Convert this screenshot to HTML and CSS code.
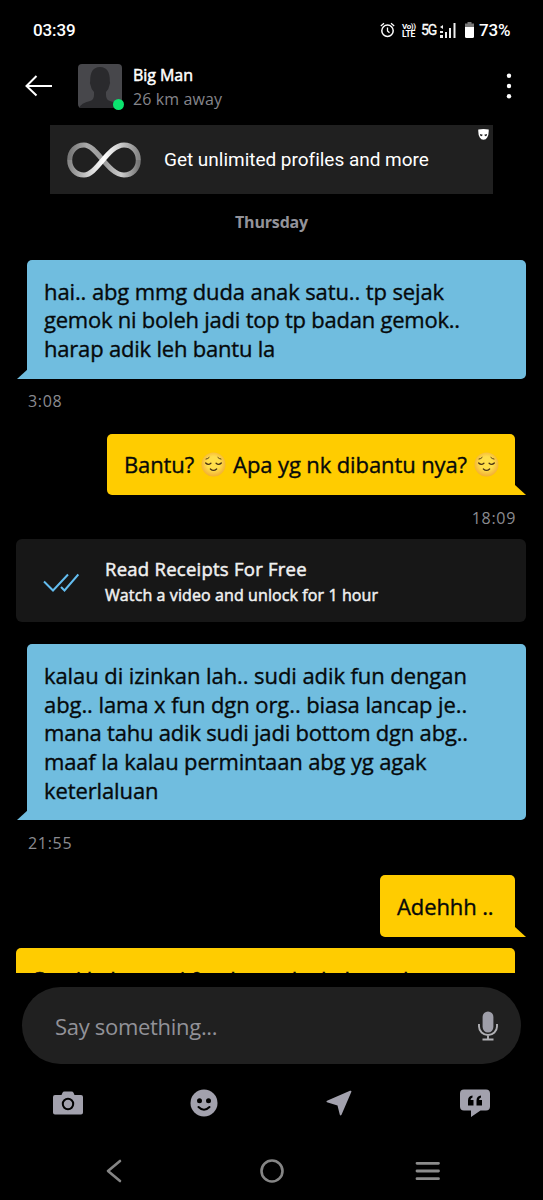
FILE: index.html
```html
<!DOCTYPE html>
<html lang="ms">
<head>
<meta charset="utf-8">
<title>Big Man</title>
<link rel="stylesheet" href="styles.css">
</head>
<body>
<svg width="0" height="0" class="defs" aria-hidden="true">
  <defs>
    <radialGradient id="face" cx=".5" cy=".45" r=".55"><stop offset=".5" stop-color="#ffdf4a"/><stop offset="1" stop-color="#f3ae35"/></radialGradient>
    <symbol id="relieved" viewBox="0 0 24 24">
      <circle cx="12" cy="12" r="11.5" fill="url(#face)"/>
      <g fill="none" stroke="#4a3212" stroke-width="1.3" stroke-linecap="round">
        <path d="M4.500 10.500q2.500 2.600 5 .2M14.500 10.700q2.500 2.400 5-.2M9 16.300q3 2.700 6 0"/>
        <path d="M4.800 6.800q1.800-.2 3-1.500M16.200 5.300q1.200 1.300 3 1.500" stroke-width=".9"/>
      </g>
    </symbol>
  </defs>
</svg>
<div class="phone">
  <div class="status">
    <span class="clock">03:39</span>
    <svg class="alarm" width="15" height="16" viewBox="0 0 15 16" fill="none" stroke="#fff"><circle cx="7.500" cy="8.700" r="5.700" stroke-width="1.500"/><path d="M7.500 5.500v3.500l2 1.800M.8 4L4 1.300M14.200 4L11 1.300" stroke-width="1.300"/></svg>
    <span class="volte"><span>Vo))</span><span class="lte">LTE</span></span>
    <span class="net">5G</span>
    <svg class="signal" width="16" height="15" viewBox="0 0 16 15" fill="#eee"><path d="M0 4l3-2v4zM0 8h3v2H0zM0 12h3v3H0zM5 9h2v6H5zM9 5h2v10H9zM13.500 0h2v15h-2z"/></svg>
    <svg class="battery" width="9" height="16" viewBox="0 0 9 16"><path d="M2.500 0h4v1.500H9V6H0V1.500h2.500z" fill="#777"/><path d="M0 5h9v9.500q0 1.500-1.500 1.500h-6Q0 16 0 14.500z" fill="#fff"/></svg>
    <span class="percent">73%</span>
  </div>

  <div class="header">
    <svg class="back" width="28" height="22" viewBox="0 0 28 22" fill="none" stroke="#fff" stroke-width="2"><path d="M11.500 1L1.500 11l10 9.500M1.500 11H27"/></svg>
    <div class="avatar">
      <svg width="44" height="44" viewBox="0 0 44 44"><rect width="44" height="44" rx="4" fill="#47474b"/><path d="M1 44q2-5 11-7 4-1 4-6v-3q-3-3-3.500-7-1-2-.3-4Q12 3 22 3t9.800 14q.7 2-.3 4-.5 4-3.500 7v3q0 5 4 6 9 2 11 7z" fill="#2a2a2d"/></svg>
      <span class="online"></span>
    </div>
    <div class="who">
      <span class="name">Big Man</span>
      <span class="distance">26 km away</span>
    </div>
    <svg class="more" width="6" height="26" viewBox="0 0 6 26" fill="#fff"><circle cx="3" cy="2.700" r="2.200"/><circle cx="3" cy="13" r="2.200"/><circle cx="3" cy="23.300" r="2.200"/></svg>
  </div>

  <div class="banner">
    <svg width="74" height="36" viewBox="0 0 74 36" fill="none" stroke-width="5">
      <defs>
        <linearGradient id="m1" x1="0" y1="0" x2="1" y2="0"><stop offset="0" stop-color="#777"/><stop offset=".25" stop-color="#aaa"/><stop offset=".5" stop-color="#999"/><stop offset=".75" stop-color="#ccc"/><stop offset="1" stop-color="#777"/></linearGradient>
        <linearGradient id="m2" x1="0" y1="0" x2="1" y2="0"><stop offset="0" stop-color="#888"/><stop offset=".3" stop-color="#d5d5d5"/><stop offset=".5" stop-color="#fff"/><stop offset=".75" stop-color="#c8c8c8"/><stop offset="1" stop-color="#888"/></linearGradient>
      </defs>
      <path d="M2.700 18C2.700 9 9 3 17 3c13 0 24 30 40 30 8 0 14.300-6 14.300-15" stroke="url(#m1)"/>
      <path d="M2.700 18C2.700 27 9 33 17 33c13 0 24-30 40-30 8 0 14.300 6 14.300 15" stroke="url(#m2)"/>
    </svg>
    <span class="offer">Get unlimited profiles and more</span>
    <svg class="mask" width="11" height="11" viewBox="0 0 11 11"><path d="M.3.500Q5.500-.3 10.700.500q.3 5.500-1.500 8Q8 10.800 5.500 10.800T1.800 8.500Q0 6 .3.500z" fill="#fff"/><path d="M2 5l2.800.8Q4 7.500 3 7.200 2 6.800 2 5zM9 5l-2.800.8Q7 7.500 8 7.200 9 6.800 9 5z" fill="#202020"/></svg>
  </div>

  <div class="day">Thursday</div>

  <div class="thread">
    <div class="bubble theirs">
      <p class="s11">hai.. abg mmg duda anak satu.. tp sejak</p>
      <p class="s23">gemok ni boleh jadi top tp badan gemok..</p>
      <p class="s21">harap adik leh bantu la</p>
      <svg class="tail" width="11" height="10" viewBox="0 0 11 10"><path d="M11 0v10H0z"/></svg>
    </div>
    <div class="time">3:08</div>

    <div class="bubble mine first">
      <p class="s11">Bantu? <svg class="emoji"><use href="#relieved"/></svg> Apa yg nk dibantu nya? <svg class="emoji"><use href="#relieved"/></svg></p>
      <svg class="tail" width="11" height="10" viewBox="0 0 11 10"><path d="M0 0v10h11z"/></svg>
    </div>
    <div class="time right">18:09</div>

    <div class="receipts">
      <svg width="36" height="19" viewBox="0 0 36 19" fill="none" stroke="#63bdf0" stroke-width="2"><path d="M1 8.500l9 9L25 1.500M18 14l3.500 3.500L35.300 1.500"/></svg>
      <div class="receipts-text">
        <span class="receipts-title">Read Receipts For Free</span>
        <span class="receipts-sub">Watch a video and unlock for 1 hour</span>
      </div>
    </div>

    <div class="bubble theirs">
      <p class="s08">kalau di izinkan lah.. sudi adik fun dengan</p>
      <p class="s08">abg.. lama x fun dgn org.. biasa lancap je..</p>
      <p class="s21">mana tahu adik sudi jadi bottom dgn abg..</p>
      <p class="s15">maaf la kalau permintaan abg yg agak</p>
      <p class="s11">keterlaluan</p>
      <svg class="tail" width="11" height="10" viewBox="0 0 11 10"><path d="M11 0v10H0z"/></svg>
    </div>
    <div class="time late">21:55</div>

    <div class="bubble mine second">
      <p class="s11">Adehhh ..</p>
      <svg class="tail" width="11" height="10" viewBox="0 0 11 10"><path d="M0 0v10h11z"/></svg>
    </div>
    <div class="bubble mine third">
      <p class="s15">Sorri kalau tepi fun banyak akal untuk</p>
    </div>
  </div>

  <div class="composer">
    <span class="hint">Say something...</span>
    <svg width="20" height="30" viewBox="0 0 20 30"><rect x="4.600" y=".5" width="10.800" height="21" rx="5.400" fill="#9e9ea8"/><path d="M1 13v2.500a9 8.500 0 0 0 18 0V13M10 24v4M4.500 28.500h11" fill="none" stroke="#b0b0b4" stroke-width="1.900"/></svg>
  </div>

  <div class="tools">
    <div><svg width="30" height="24" viewBox="0 0 30 24"><path d="M2 4h6.500l1-2.200Q10 .5 11.500.5h7q1.500 0 2 1.300l1 2.200H28q2 0 2 2v15.500q0 2-2 2H2q-2 0-2-2V6q0-2 2-2z" fill="#a2a1ad"/><circle cx="15" cy="13" r="5.200" fill="none" stroke="#000" stroke-width="2"/></svg></div>
    <div><svg width="28" height="28" viewBox="0 0 28 28"><circle cx="14" cy="14" r="13.500" fill="#a2a1ad"/><circle cx="9.500" cy="11.700" r="2.500"/><circle cx="18.500" cy="11.700" r="2.500"/><path d="M8.500 18q5.500 5.500 11 0" fill="none" stroke="#000" stroke-width="2" stroke-linecap="round"/></svg></div>
    <div><svg width="26" height="26" viewBox="0 0 26 26"><path d="M1 10.700L24 .8q1.800-.5 1.300 1.200L15.500 24.800q-1 1.500-1.700 0L11.500 15.500 1 12.200q-1.200-.7 0-1.500z" fill="#a2a1ad"/></svg></div>
    <div><svg width="30" height="28" viewBox="0 0 30 28"><path d="M4 .5h22q4 0 4 4v13q0 4-4 4h-5.500L11 28v-6.500H4q-4 0-4-4v-13q0-4 4-4z" fill="#a2a1ad"/><path d="M8 16.500v-5Q8 7 12.500 6.500v2Q10.500 9 10.500 11H13.500v5.500zM16.500 16.500v-5Q16.500 7 21 6.500v2Q19 9 19 11h3v5.500z"/></svg></div>
  </div>

  <div class="nav">
    <svg width="16" height="24" viewBox="0 0 16 24" fill="none" stroke="#858585" stroke-width="2.600" stroke-linecap="round" stroke-linejoin="round"><path d="M14 2L2 12l12 10"/></svg>
    <svg class="home" width="24" height="24" viewBox="0 0 24 24" fill="none" stroke="#858585" stroke-width="2.600"><circle cx="12" cy="12" r="10.500"/></svg>
    <svg width="26" height="20" viewBox="0 0 26 20" fill="none" stroke="#8c8c8c" stroke-width="2.800" stroke-linecap="round"><path d="M2 2.300h21.500M2 10h21.500M2 17.700h21.500"/></svg>
  </div>
</div>
</body>
</html>
```
FILE: styles.css
```css
* { box-sizing: border-box; }
body { margin: 0; background: #000; color: #fff; font-family: "Open Sans", "Noto Sans", sans-serif; }
p { margin: 0; }
svg { display: block; flex: none; }
.defs { position: absolute; }
.phone { width: 543px; height: 1200px; display: flex; flex-direction: column; overflow: hidden; }

.status { height: 60px; padding-left: 33px; display: flex; align-items: center; font: 500 16px Roboto, sans-serif; flex: none; }
.clock { width: 347px; font-size: 17px; letter-spacing: -.1px; }
.volte { margin-left: 7px; width: 14px; display: flex; flex-direction: column; font: 700 8px/7px Roboto, sans-serif; letter-spacing: -.4px; }
.lte { font-size: 8.500px; line-height: 8px; letter-spacing: -.2px; }
.net { margin-left: 5px; width: 19px; font-size: 14px; letter-spacing: -1.200px; font-weight: 400; -webkit-text-stroke: .3px #fff; }
.battery { margin-left: 9px; }
.percent { margin-left: 5px; font-size: 17px; letter-spacing: -.2px; }

.header { height: 52px; padding: 0 30px 0 25px; display: flex; align-items: center; flex: none; }
.avatar { position: relative; margin-left: 25px; }
.online { position: absolute; right: -2px; bottom: -2px; width: 11px; height: 11px; border-radius: 50%; background: #0be46f; }
.who { margin-left: 11px; flex: 1; display: flex; flex-direction: column; line-height: 24px; }
.name { font-size: 16px; -webkit-text-stroke: .5px #fff; letter-spacing: -.05px; padding-top: 2px; }
.distance { font-size: 16px; color: #85858b; letter-spacing: .1px; }
.more { margin-right: 1px; }

.banner { position: relative; width: 443px; height: 69px; margin: 13px 0 0 50px; padding-left: 17px; display: flex; align-items: center; gap: 23px; background: #202020; flex: none; }
.offer { font: 400 19px Roboto, sans-serif; letter-spacing: -.02px; }
.mask { position: absolute; top: 4px; right: 4px; }
.day { height: 66px; line-height: 56px; text-align: center; font-weight: 700; font-size: 16px; letter-spacing: -.18px; color: #93939a; flex: none; }

.thread { height: 713px; display: flex; flex-direction: column; align-items: flex-start; overflow: hidden; flex: none; }
.bubble { position: relative; border-radius: 5px; padding: 16.500px 17px 16px; color: #06090b; font-size: 22px; line-height: 28.700px; white-space: nowrap; -webkit-text-stroke: .35px #06090b; flex: none; }
.tail { position: absolute; bottom: 0; }
.theirs { margin-left: 27px; width: 499px; background: #70bddf; border-bottom-left-radius: 0; }
.theirs .tail { left: -10.500px; fill: #70bddf; stroke: none; }
.mine { align-self: flex-end; margin-right: 28px; background: #fc0; border-bottom-right-radius: 0; }
.mine .tail { right: -10.500px; fill: #fc0; stroke: none; }
.first { width: 408px; }
.first p { display: flex; align-items: center; gap: 7px; }
.second { width: 135px; }
.third { width: 499px; margin-top: 11px; padding-top: 17px; }
.emoji { width: 25px; height: 25px; stroke: none; }
.s08 { letter-spacing: -.08px; }
.s11 { letter-spacing: -.11px; }
.s15 { letter-spacing: -.15px; }
.s21 { letter-spacing: -.2px; }
.s23 { letter-spacing: -.23px; }
.time { height: 55px; line-height: 45px; margin-left: 28px; font-size: 16px; letter-spacing: .7px; color: #8b8b90; flex: none; }
.right { align-self: flex-end; margin-right: 27px; height: 44.500px; line-height: 46px; }
.late { line-height: 46px; }

.receipts { width: 510px; height: 83px; margin: 0 0 22px 16px; padding: 3px 0 0 27px; display: flex; align-items: center; gap: 26px; background: #171717; border-radius: 6px; flex: none; }
.receipts-text { display: flex; flex-direction: column; color: #f0f0f0; -webkit-text-stroke: .5px #f0f0f0; line-height: 27px; }
.receipts-title { font-size: 18.500px; letter-spacing: .25px; }
.receipts-sub { font-size: 16px; letter-spacing: .1px; }

.composer { height: 77px; margin: 14px 22px 0; padding: 0 23px 0 33px; border-radius: 39px; background: #202020; display: flex; align-items: center; justify-content: space-between; flex: none; }
.hint { font-size: 22px; letter-spacing: -.3px; color: #929298; }
.tools { height: 78px; display: grid; grid-template-columns: repeat(4, 1fr); align-items: center; flex: none; }
.tools div { display: flex; justify-content: center; }
.nav { height: 58px; padding: 0 102px 0 106px; display: flex; align-items: center; justify-content: space-between; }
.home { margin-left: 6px; }
```
